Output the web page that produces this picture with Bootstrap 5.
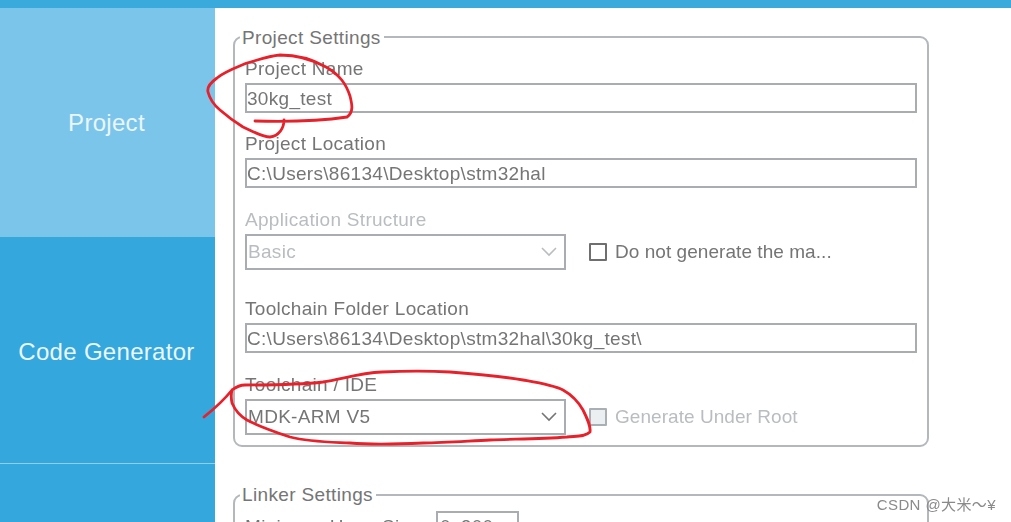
<!DOCTYPE html>
<html>
  <head>
    <meta charset="UTF-8">
    <title>Project Manager</title>
    <link rel="stylesheet" href="https://cdn.jsdelivr.net/npm/bootstrap@5.3.0/dist/css/bootstrap.min.css">
    <style>
      html, body { height: 522px; overflow: hidden; background: #fff; }
      body { font-family: "Liberation Sans", Arial, sans-serif; color: #757575; position: relative; }
      .page-wrap { filter: blur(.4px); height: 522px; overflow: hidden; }
      .top-strip { height: 8px; background: #3aa9dc; }
      .side-bar { width: 215px; height: 514px; flex: none; background: #34a7dc; }
      .side-tab { color: #eaf6fc; font-size: 24px; letter-spacing: .3px; display: flex; align-items: center; justify-content: center; }
      .side-tab.is-active { height: 229px; background: #7cc5ea; padding-top: 1px; padding-right: 2px; }
      .side-tab.is-code { height: 227px; border-bottom: 1px solid #8fd0ee; padding-top: 3px; padding-right: 2px; }
      .main-pane { padding: 28px 0 0 18px; }
      .group-box { position: relative; width: 696px; height: 411px; border: 2px solid #b4b8bc; border-radius: 9px; padding: 19px 10px 0 10px; }
      .group-box + .group-box { margin-top: 47px; }
      .group-title { position: absolute; top: -12px; left: 5px; background: #fff; padding: 0 3px 0 2px; font-size: 19px; line-height: 24px; letter-spacing: .35px; }
      .group-box + .group-box .group-title { top: -13px; }
      .field-label { font-size: 19px; line-height: 24px; letter-spacing: .3px; height: 24px; margin: 0 0 2px; display: block; color: #757575; }
      .field-label.is-off, .check-text.is-off { color: #b9bdc0; }
      .field-input.form-control, .field-select.form-select { height: 30px; border: 2px solid #a9adb1; border-radius: 0; padding: 1px 0 0; font-size: 19px; letter-spacing: .3px; color: #757575; background-color: #fff; box-shadow: none; }
      .field-select.form-select { width: 321px; height: 36px; flex: none; background-image: none; padding-left: 1px; }
      .select-wrap { position: relative; width: 321px; flex: none; }
      .select-wrap svg { position: absolute; right: 9px; top: 13px; }
      .field-select.is-off { color: #b9bdc0; border-color: #a9adb1; }
      .field-gap { margin-top: 19px; }
      .field-gap-md { margin-top: 20px; }
      .field-gap-lg { margin-top: 27px; }
      .check-row { gap: 23px; }
      .check-box { width: 18px; height: 18px; flex: none; border: 2px solid #6f6f6f; border-radius: 1px; background: #fff; }
      .check-box.is-off { border-color: #a9b0b5; background: #eceff1; }
      .check-text { font-size: 19px; letter-spacing: .05px; line-height: 24px; color: #757575; }
      .heap-row { margin-top: -4px; gap: 16px; }
      .heap-label { padding-top: 4px; letter-spacing: .3px; }
      .heap-input { width: 83px; height: 30px; border: 2px solid #a9adb1; padding: 0 2px; font-size: 19px; letter-spacing: .3px; color: #757575; line-height: 28px; }
      .scribble { position: absolute; left: 0; top: 0; pointer-events: none; }
      .water-mark { position: absolute; right: 15px; bottom: 6px; font-size: 15px; letter-spacing: .4px; color: #8a8a8a; font-family: "Liberation Sans", "Noto Sans CJK SC", sans-serif; }
    </style>
  </head>
  <body>
    <div class="page-wrap">
    <div class="top-strip"></div>
    <div class="d-flex">
      <div class="side-bar">
        <div class="side-tab is-active">Project</div>
        <div class="side-tab is-code">Code Generator</div>
      </div>
      <div class="main-pane flex-grow-1">
        <div class="group-box">
          <div class="group-title">Project Settings</div>
          <label class="field-label">Project Name</label>
          <input class="field-input form-control" value="30kg_test">
          <label class="field-label field-gap">Project Location</label>
          <input class="field-input form-control" value="C:\Users\86134\Desktop\stm32hal">
          <label class="field-label field-gap-md is-off">Application Structure</label>
          <div class="d-flex align-items-center check-row">
            <div class="select-wrap">
              <select class="field-select form-select is-off"><option>Basic</option></select>
              <svg width="16" height="10" viewBox="0 0 16 10"><path d="M1 1l7 7 7-7" fill="none" stroke="#b9bdc0" stroke-width="1.6"/></svg>
            </div>
            <div class="d-flex align-items-center gap-2">
              <span class="check-box"></span>
              <span class="check-text">Do not generate the ma...</span>
            </div>
          </div>
          <label class="field-label field-gap-lg">Toolchain Folder Location</label>
          <input class="field-input form-control" value="C:\Users\86134\Desktop\stm32hal\30kg_test\">
          <label class="field-label field-gap-md">Toolchain / IDE</label>
          <div class="d-flex align-items-center check-row">
            <div class="select-wrap">
              <select class="field-select form-select"><option>MDK-ARM V5</option></select>
              <svg width="16" height="10" viewBox="0 0 16 10"><path d="M1 1l7 7 7-7" fill="none" stroke="#757575" stroke-width="1.6"/></svg>
            </div>
            <div class="d-flex align-items-center gap-2">
              <span class="check-box is-off"></span>
              <span class="check-text is-off">Generate Under Root</span>
            </div>
          </div>
        </div>
        <div class="group-box">
          <div class="group-title">Linker Settings</div>
          <div class="d-flex heap-row">
            <span class="check-text heap-label">Minimum Heap Size</span>
            <div class="heap-input">0x200</div>
          </div>
        </div>
      </div>
    </div>
    <svg class="scribble" width="1011" height="522" viewBox="0 0 1011 522" fill="none" stroke="#e8202a" stroke-width="2.8" stroke-linecap="round" stroke-linejoin="round">
      <path d="M255 121C290 122 320 121 347 117C354 112 352 104 350 96C346 84 340 75 326 67C310 58 295 55 280 55C268 56 258 60 247 63C235 68 224 72 217 78C210 83 207 88 208 92C210 100 214 105 220 110C228 117 235 122 243 127C252 131 262 137 270 137C279 136 284 128 284 120"/>
      <path d="M204 417C214 409 224 400 232 390C236 387 240 385 245 385C270 385 298 385 323 382C342 379 360 373 382 372C405 371 430 371 450 372C475 374 500 376 523 380C540 383 553 385 563 390C572 395 579 403 583 410C587 418 591 426 590 432C585 437 576 436 567 437C540 439 515 439 490 440C468 441 445 443 423 443C400 444 375 445 350 443C330 442 310 442 290 437C275 432 260 427 247 420C240 416 235 410 232 403C231 398 231 394 232 390"/>
    </svg>
    <div class="water-mark">CSDN @大米～¥</div>
    </div>
    <script src="https://cdn.jsdelivr.net/npm/bootstrap@5.3.0/dist/js/bootstrap.bundle.min.js"></script>
  </body>
</html>
